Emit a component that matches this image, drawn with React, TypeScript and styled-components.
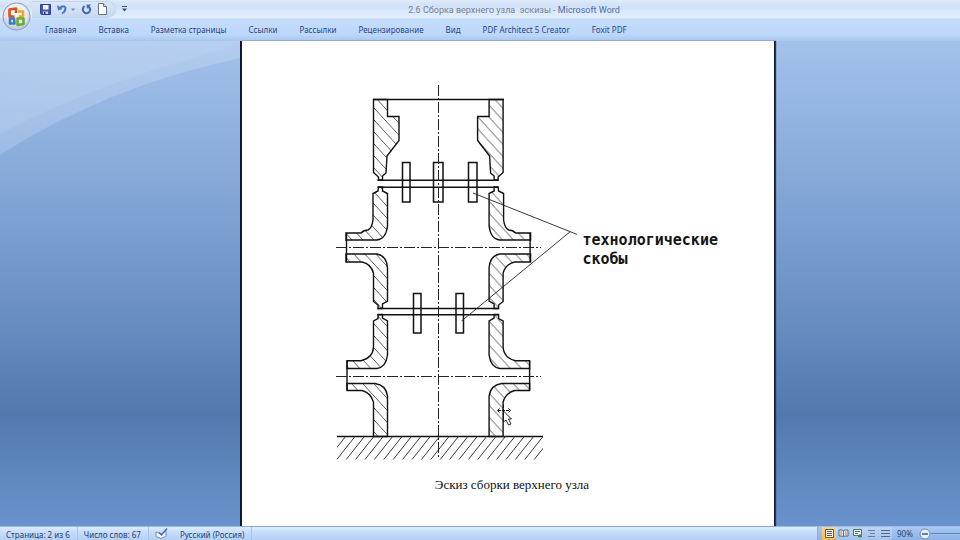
import React from "react";
import styled, { createGlobalStyle } from "styled-components";

const GlobalStyle = createGlobalStyle`
  * { box-sizing: border-box; }
  body { margin: 0; font-family: "Noto Sans", "Open Sans", sans-serif; }
  button { font: inherit; color: inherit; border: 0; padding: 0; background: none; }
`;

const Shell = styled.div`
  display: grid;
  grid-template-rows: auto auto 1fr auto;
  min-height: 100vh;
  position: relative;
  overflow: hidden;
`;

const TitleBar = styled.header`
  display: flex;
  align-items: center;
  height: 19px;
  padding-left: 32px;
  background: linear-gradient(#dfebfa 0%, #cfe0f7 35%, #d9e8fb 60%, #e0eefe 100%);
  border-bottom: 1px solid #cfe1f5;
`;

const QuickAccess = styled.div`
  display: flex;
  align-items: center;
  gap: 6px;
  height: 17px;
  padding: 0 8px;
  border: 1px solid #c3d5ee;
  border-left: 0;
  border-radius: 0 9px 9px 0;
  background: linear-gradient(#dbe7f8, #c6d9f2);
`;

const IconButton = styled.button`
  display: flex;
  align-items: center;
  justify-content: center;
  height: 14px;
`;

const CustomizeButton = styled(IconButton)`
  width: 16px;
`;

const DocumentTitle = styled.h1`
  flex: 1;
  margin: 0;
  padding-top: 2px;
  padding-right: 64px;
  text-align: center;
  font-family: Roboto, "Noto Sans", sans-serif;
  font-size: 9px;
  line-height: 12px;
  font-weight: 400;
  white-space: pre;
  color: #78828f;
`;

const AppName = styled.span`
  color: #4c6ca4;
`;

const OfficeButton = styled.button`
  position: absolute;
  left: 2px;
  top: 2px;
  z-index: 2;
  display: flex;
`;

const Tabs = styled.nav`
  display: flex;
  align-items: center;
  gap: 22px;
  height: 22px;
  padding: 1px 45px 2px;
  background: linear-gradient(#c5dcfb, #bdd8fc 70%, #a9c6ed);
  color: #1f4788;
  font-size: 8px;
  line-height: 14px;
`;

const Tab = styled.button`
  white-space: nowrap;
`;

const Workspace = styled.main`
  position: relative;
  display: grid;
  grid-template-columns: 240fr 535fr 185fr;
  background: linear-gradient(#a3c2eb 0%, #86a9d9 28%, #6a90c4 55%, #5179ae 77%, #5b84bc 86%, #6a93cd 100%);
`;

const Swoosh = styled.svg`
  position: absolute;
  left: 0;
  top: 0;
`;

const Page = styled.article`
  grid-column: 2;
  position: relative;
  display: flex;
  flex-direction: column;
  align-items: center;
  gap: 16px;
  padding: 43px 48px 32px 92px;
  background: #fff;
  border: solid #10182a;
  border-width: 0 1px 0 2px;
  box-shadow: 1px 0 1px #24395e;
`;

const Figure = styled.figure`
  display: flex;
  align-items: flex-start;
  gap: 5px;
  margin: 0;
`;

const Drawing = styled.svg`
  display: block;
  flex: none;
`;

const Callout = styled.p`
  width: 142px;
  margin: 147px 0 0;
  font-family: "DejaVu Sans Mono", monospace;
  font-weight: 700;
  font-size: 15px;
  line-height: 19px;
  color: #151515;
`;

const Caption = styled.p`
  margin: 0;
  padding-right: 36px;
  font-family: "Liberation Serif", serif;
  font-size: 13px;
  line-height: 18px;
  color: #111;
  white-space: nowrap;
`;

const StatusBar = styled.footer`
  display: flex;
  align-items: stretch;
  height: 14px;
  border-top: 1px solid #9dbde8;
  background: linear-gradient(#dcebfd, #c3dafa 50%, #b4d0f6);
  color: #26436f;
  font-size: 8px;
  line-height: 14px;
`;

const StatusItem = styled.button`
  display: flex;
  align-items: center;
  padding: 2px 7px 0 6px;
  border-right: 1px solid #a6c3ea;
  white-space: nowrap;
`;

const ProofButton = styled(StatusItem)`
  padding: 0 6px;
  border-right: 0;
`;

const Spacer = styled.div`
  flex: 1;
`;

const ViewGroup = styled.div`
  display: flex;
  align-items: stretch;
  padding: 0 0 0 4px;
  background: linear-gradient(#a9c6ee, #8fb2e2);
  border-left: 1px solid #8badd9;
`;

const ViewButton = styled.button<{ $active?: boolean }>`
  display: flex;
  align-items: center;
  justify-content: center;
  width: 14px;
  background: ${(p) => (p.$active ? "linear-gradient(#fbd58e, #f5b95c)" : "linear-gradient(#bfd5f3, #a5c3ea)")};
`;

const Zoom = styled.div`
  display: flex;
  align-items: center;
  gap: 6px;
  width: 68px;
  padding-left: 5px;
  background: linear-gradient(#a9c8f3, #8db3e8);
`;

const ZoomTrack = styled.span`
  flex: 1;
  height: 1px;
  margin-left: -6px;
  background: #6385b8;
`;

const upperWall =
  "M373.5 99.5H387.5V116.5H399V140.5L387 156L386 173L382.5 176V180H378.5V177L373.5 172.5Z";

const middleWalls = [
  "M378.5 187H382.5V191L387.5 193.5V226Q386 239 377 240H346V233H361Q364 230 368 230Q372 228 373 220V193.5L378 191Z",
  "M346 254H377Q387 256 387.5 268V301L382.5 304V308.5H378V305L373.5 301.5V273Q371 264 362 262H346Z",
];

const lowerWalls = [
  "M378 314.5H382.5V318L387.5 321V355Q386 367 377 368.5H347V360.7H361Q373 358 373.5 347V321L378 318.5Z",
  "M347 383.5H375Q386 385 387.5 396V436.5H373.5V402Q371 393 362 390.5H347Z",
];

const cramps = [
  { x: 402.5, y: 162.5, w: 7.5, h: 39.5 },
  { x: 433.5, y: 162.5, w: 9.5, h: 39.5 },
  { x: 468.5, y: 162.5, w: 8.5, h: 39.5 },
  { x: 413.5, y: 293.5, w: 7.5, h: 39.5 },
  { x: 456, y: 293.5, w: 7.5, h: 39.5 },
];

const groundStrokes = Array.from({ length: 24 }, (_, i) => 346 + i * 9.4);

function Walls({ hatch }: { hatch: string }) {
  return (
    <g fill={`url(#${hatch})`} stroke="#111" strokeWidth="1.4">
      {[upperWall, ...middleWalls, ...lowerWalls].map((d) => (
        <path key={d} d={d} />
      ))}
      <path d="M346.5 233V262M347 361V390" />
    </g>
  );
}

function AssemblySketch() {
  return (
    <Drawing width="242" height="376" viewBox="336 84 242 376" role="img" aria-label="Эскиз сборки">
      <defs>
        <pattern id="hatch" width="11" height="12" patternUnits="userSpaceOnUse">
          <path d="M-11 -12L22 24" stroke="#333" strokeWidth="0.8" />
        </pattern>
        <pattern id="hatchMirrored" width="11" height="12" patternUnits="userSpaceOnUse">
          <path d="M-11 24L22 -12" stroke="#333" strokeWidth="0.8" />
        </pattern>
        <clipPath id="ground">
          <rect x="337" y="436" width="206" height="23.5" />
        </clipPath>
      </defs>
      <Walls hatch="hatch" />
      <g transform="translate(876.6 0) scale(-1 1)">
        <Walls hatch="hatchMirrored" />
      </g>
      <g stroke="#111" strokeWidth="1.5" fill="none">
        <path d="M373 99.4H504M377.5 180.3H498.5M377.5 187.2H498.5M377.5 308.6H498.5M377.5 314.8H498.5M337 436.4H543" />
        {cramps.map((c) => (
          <rect key={`${c.x}-${c.y}`} x={c.x} y={c.y} width={c.w} height={c.h} />
        ))}
      </g>
      <g stroke="#222" strokeWidth="1" fill="none" strokeDasharray="11 2 2 2">
        <path d="M438.5 85V459" />
        <path d="M336 247.5H541" />
        <path d="M336 376.5H541" />
      </g>
      <path d="M473 193L577 234.4M461.5 321L570 231.8" stroke="#222" strokeWidth="0.9" />
      <g clipPath="url(#ground)" stroke="#222" strokeWidth="0.9">
        {groundStrokes.map((x) => (
          <path key={x} d={`M${x} 436L${x - 19} 460`} />
        ))}
      </g>
      <g stroke="#111" strokeWidth="1" fill="#fff">
        <path d="M498 410.5H510M503.5 405V414" strokeDasharray="3 1" />
        <path d="M499.5 408.5L497.500 410.500L499.5 412.5M508.5 408.5L510.500 410.500L508.5 412.5" fill="none" />
        <path d="M503.5 411V422L506 420L508.500 425L511 424L508.500 419H511.500Z" strokeWidth="0.9" />
      </g>
    </Drawing>
  );
}

function OfficeLogo() {
  return (
    <svg width="29" height="29" viewBox="0 0 29 29" aria-hidden="true">
      <defs>
        <radialGradient id="orb" cx="50%" cy="35%" r="65%">
          <stop offset="0" stopColor="#ffffff" />
          <stop offset="0.6" stopColor="#e3e9f2" />
          <stop offset="1" stopColor="#b5c2d6" />
        </radialGradient>
      </defs>
      <circle cx="14.500" cy="14.500" r="13.600" fill="url(#orb)" stroke="#8d9db8" />
      <g fill="none" strokeWidth="2.600" strokeLinejoin="round">
        <path d="M12.500 14.500H7.500V7.500L14 6.500V11" stroke="#e0501c" />
        <path d="M16 9.500H21V14.500H16.500" stroke="#f0a524" />
        <path d="M12 16.500H8V21.500H12.500Z" stroke="#3f7cc4" />
        <path d="M15.500 16.500H21.500V22L15.500 23Z" stroke="#6cab37" />
      </g>
    </svg>
  );
}

function QuickIcons() {
  return (
    <QuickAccess>
      <IconButton aria-label="Сохранить">
        <svg width="11" height="11" viewBox="0 0 11 11">
          <path d="M0.500 0.500H10.500V10.500H1.500L0.500 9.500Z" fill="#4457ae" stroke="#303f8d" />
          <path d="M3 1H8.500V5.500H3Z" fill="#eef3fd" />
          <path d="M3 7.500H8V10H3Z" fill="#c9d3ee" />
          <path d="M4 8H5.500V10H4Z" fill="#26336f" />
        </svg>
      </IconButton>
      <IconButton aria-label="Отменить">
        <svg width="18" height="11" viewBox="0 0 18 11">
          <path d="M2.500 4Q7 0.500 8.500 4Q8.500 7.500 5 9.500" fill="none" stroke="#4d74c4" strokeWidth="2" />
          <path d="M0 1L1 6.500L5.500 5Z" fill="#4d74c4" />
          <path d="M14 4.500H18L16 7Z" fill="#7990b5" />
        </svg>
      </IconButton>
      <IconButton aria-label="Повторить">
        <svg width="11" height="11" viewBox="0 0 11 11">
          <path d="M3.500 2Q0.500 5 2.800 8Q5.500 10.500 8.200 8Q10.300 5 7.500 2.500" fill="none" stroke="#4468bd" strokeWidth="2" />
          <path d="M5.500 0.500H10L6 5Z" fill="#4468bd" />
        </svg>
      </IconButton>
      <IconButton aria-label="Создать">
        <svg width="9" height="12" viewBox="0 0 9 12">
          <path d="M0.500 0.500H5.500L8.500 3.500V11.500H0.500Z" fill="#fff" stroke="#69738a" />
          <path d="M5.500 0.500V3.500H8.500" fill="#d8deea" stroke="#69738a" />
        </svg>
      </IconButton>
    </QuickAccess>
  );
}

const tabs = [
  "Главная",
  "Вставка",
  "Разметка страницы",
  "Ссылки",
  "Рассылки",
  "Рецензирование",
  "Вид",
  "PDF Architect 5 Creator",
  "Foxit PDF",
];

const viewIcons = [
  { label: "Разметка страницы", d: "M1.500 1.500H9.500V9.500H1.500ZM3 3.500H8M3 5.500H8M3 7.500H8", color: "#5d5a50" },
  { label: "Режим чтения", d: "M1 2H4.500L5.500 3L6.500 2H10V8H6.500L5.500 9L4.500 8H1ZM5.500 3V9M2.500 4H4M2.500 6H4M7 4H8.500M7 6H8.500", color: "#4e6587" },
  { label: "Веб-документ", d: "M1.500 1.500H9.500V7.500H1.500ZM3 3.500H8M3 5.500H6M6 8.500H10M8 6V10", color: "#3f7b6c" },
  { label: "Структура", d: "M2 2.500H9M4 5.500H9M2 8.500H9", color: "#6580a8" },
  { label: "Черновик", d: "M1 2.500H10M1 5.500H10M1 8.500H10", color: "#4c6994" },
];

export default function App() {
  return (
    <Shell>
      <GlobalStyle />
      <OfficeButton aria-label="Office">
        <OfficeLogo />
      </OfficeButton>
      <TitleBar>
        <QuickIcons />
        <CustomizeButton aria-label="Настройка панели">
          <svg width="5" height="6" viewBox="0 0 5 6">
            <path d="M0 0.500H5" stroke="#3d5173" />
            <path d="M0 2.500H5L2.500 5.500Z" fill="#3d5173" />
          </svg>
        </CustomizeButton>
        <DocumentTitle>
          {"2.6 Сборка верхнего узла  эскизы - "}
          <AppName>Microsoft Word</AppName>
        </DocumentTitle>
      </TitleBar>
      <Tabs>
        {tabs.map((t) => (
          <Tab key={t}>{t}</Tab>
        ))}
      </Tabs>
      <Workspace>
        <Swoosh width="240" height="116" viewBox="0 0 240 116" aria-hidden="true">
          <defs>
            <linearGradient id="sheen" x1="0" y1="1" x2="1" y2="0">
              <stop offset="0" stopColor="#c8dbf3" stopOpacity="0.3" />
              <stop offset="1" stopColor="#c8dbf3" stopOpacity="0.4" />
            </linearGradient>
          </defs>
          <path d="M0 0H240V17Q105 46 0 114Z" fill="url(#sheen)" />
          <path d="M0 0H240V4Q100 40 0 93Z" fill="#c3d8f2" fillOpacity="0.25" />
        </Swoosh>
        <Page>
          <Figure>
            <AssemblySketch />
            <Callout>технологические скобы</Callout>
          </Figure>
          <Caption>Эскиз сборки верхнего узла</Caption>
        </Page>
      </Workspace>
      <StatusBar>
        <StatusItem>Страница: 2 из 6</StatusItem>
        <StatusItem>Число слов: 67</StatusItem>
        <ProofButton aria-label="Проверка правописания">
          <svg width="13" height="11" viewBox="0 0 13 11">
            <path d="M1 4L6 6L11 3V8L6 10.500L1 8.500Z" fill="#f4f7fc" stroke="#7187ad" strokeWidth="0.900" />
            <path d="M4 4.500L6.500 7L12 0.500" fill="none" stroke="#4b68a8" strokeWidth="1.400" />
          </svg>
        </ProofButton>
        <StatusItem>Русский (Россия)</StatusItem>
        <Spacer />
        <ViewGroup>
          {viewIcons.map((v, i) => (
            <ViewButton key={v.label} $active={i === 0} aria-label={v.label}>
              <svg width="11" height="11" viewBox="0 0 11 11">
                <path d={v.d} fill={i < 3 ? "#f4f4ea" : "none"} stroke={v.color} strokeWidth="1" />
              </svg>
            </ViewButton>
          ))}
        </ViewGroup>
        <Zoom>
          <button>90%</button>
          <IconButton aria-label="Уменьшить">
            <svg width="12" height="12" viewBox="0 0 12 12">
              <circle cx="6" cy="6" r="5" fill="#e6effb" stroke="#6c87b3" />
              <path d="M3 6H9" stroke="#3f5c8c" strokeWidth="1.500" />
            </svg>
          </IconButton>
          <ZoomTrack />
        </Zoom>
      </StatusBar>
    </Shell>
  );
}
